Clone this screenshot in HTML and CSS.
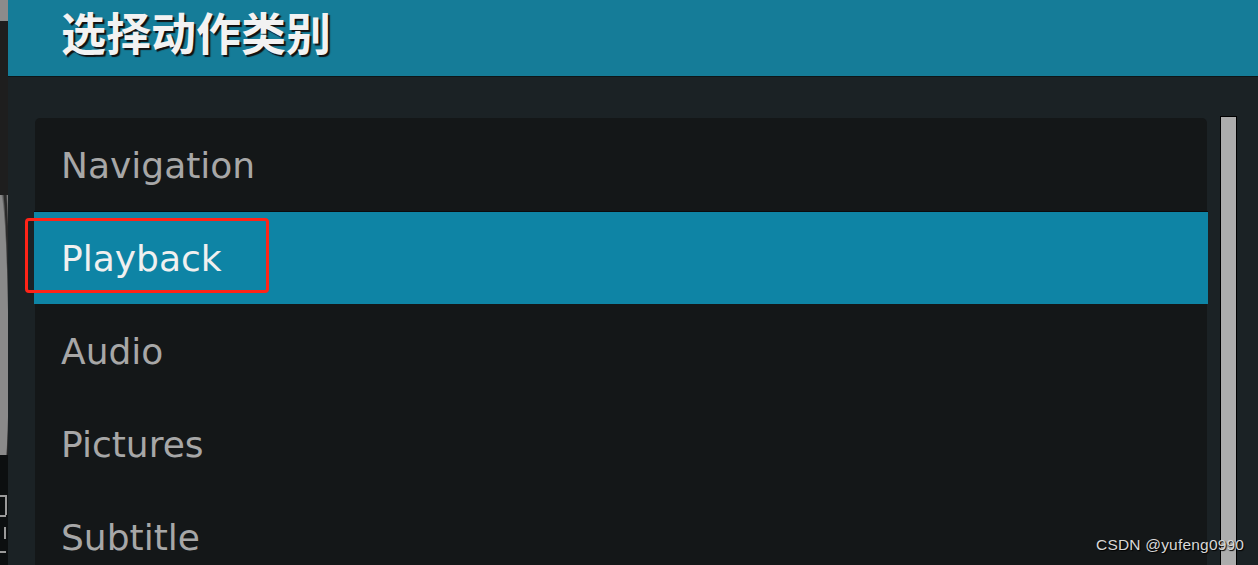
FILE: index.html
```html
<!DOCTYPE html>
<html lang="zh">
<head>
<meta charset="utf-8">
<title>选择动作类别</title>
<link rel="stylesheet" href="styles.css">
</head>
<body>
<div class="page">
  <div class="backdrop">
    <div class="bd bd-grey-top"></div>
    <div class="bd bd-dark"></div>
    <div class="bd bd-grey"></div>
    <div class="bd bd-black"></div>
  </div>
  <div class="dialog">
    <header class="dialog-header">
      <h1 class="dialog-title">选择动作类别</h1>
    </header>
    <div class="dialog-body">
      <ul class="list">
        <li class="item">Navigation</li>
        <li class="item selected">Playback</li>
        <li class="item">Audio</li>
        <li class="item">Pictures</li>
        <li class="item">Subtitle</li>
      </ul>
      <div class="scrollbar"></div>
    </div>
  </div>
  <div class="highlight"></div>
  <div class="watermark">CSDN @yufeng0990</div>
</div>
</body>
</html>
```

FILE: styles.css
```css
html, body {
  margin: 0;
  padding: 0;
  height: 100%;
  overflow: hidden;
  background: #1b2225;
}
.page {
  position: relative;
  display: flex;
  width: 1258px;
  height: 565px;
  overflow: hidden;
  font-family: "DejaVu Sans", "Noto Sans CJK SC", sans-serif;
}
.backdrop {
  width: 8px;
  flex: none;
  display: flex;
  flex-direction: column;
}
.bd-grey-top { height: 21px; background: #8b8b8b; }
.bd-dark { height: 174px; background: #1e1e1e; }
.bd-grey {
  height: 260px;
  background: #8a8a8a;
  background-image:
    radial-gradient(ellipse at 0 40px, transparent 10px, #222 11px, #222 12px, transparent 13px),
    radial-gradient(ellipse at 0 120px, transparent 10px, #333 11px, #333 12px, transparent 13px),
    radial-gradient(ellipse at 0 180px, transparent 8px, #2a2a2a 9px, #2a2a2a 10px, transparent 11px);
}
.bd-black {
  flex: 1;
  background-color: #0c0f10;
  background-image:
    linear-gradient(#9a9a9a, #9a9a9a),
    linear-gradient(#9a9a9a, #9a9a9a),
    linear-gradient(#9a9a9a, #9a9a9a),
    linear-gradient(#9a9a9a, #9a9a9a),
    linear-gradient(#9a9a9a, #9a9a9a);
  background-size: 6px 2px, 2px 20px, 6px 2px, 2px 12px, 6px 2px;
  background-position: 0 40px, 5px 40px, 0 60px, 4px 72px, 0 96px;
  background-repeat: no-repeat;
}
.dialog {
  flex: 1;
  display: flex;
  flex-direction: column;
  background: #1b2225;
}
.dialog-header {
  flex: none;
  background: #157c98;
  border-bottom: 1px solid #0d1618;
  box-sizing: border-box;
  height: 77px;
  padding-left: 53px;
}
.dialog-title {
  margin: 0;
  font-family: "Noto Sans CJK SC", sans-serif;
  font-weight: 700;
  font-size: 45px;
  line-height: 63px;
  color: #f2f2f2;
  text-shadow: 2px 2px 1px #111;
}
.dialog-body {
  flex: 1;
  display: flex;
  padding: 41px 0 0 27px;
}
.list {
  list-style: none;
  margin: 0;
  padding: 0;
  width: 1172px;
  background: #141718;
  border-radius: 5px 5px 0 0;
  flex: none;
}
.item {
  height: 93px;
  line-height: 91px;
  padding: 2px 0 0 26px;
  font-size: 36px;
  color: #a7a7a7;
  box-sizing: border-box;
}
.item.selected {
  background: #0e84a5;
  color: #f0f0f0;
  margin: 0 -1px;
  padding-left: 27px;
  border-top: 1px solid #0a0c0e;
  line-height: 90px;
}
.scrollbar {
  width: 15px;
  margin-left: 13px;
  margin-top: -2px;
  background: #acacac;
  border: 1px solid #000;
  border-bottom: none;
  flex: none;
}
.highlight {
  position: absolute;
  left: 25px;
  top: 218px;
  width: 238px;
  height: 69px;
  border: 3px solid #ff2418;
  border-radius: 4px;
}
.watermark {
  position: absolute;
  left: 1096px;
  top: 536px;
  font-family: "Liberation Sans", sans-serif;
  font-size: 15.5px;
  letter-spacing: 0.2px;
  color: #d8d8d8;
  text-shadow: 1px 1px 1px #000;
  white-space: nowrap;
}
```
